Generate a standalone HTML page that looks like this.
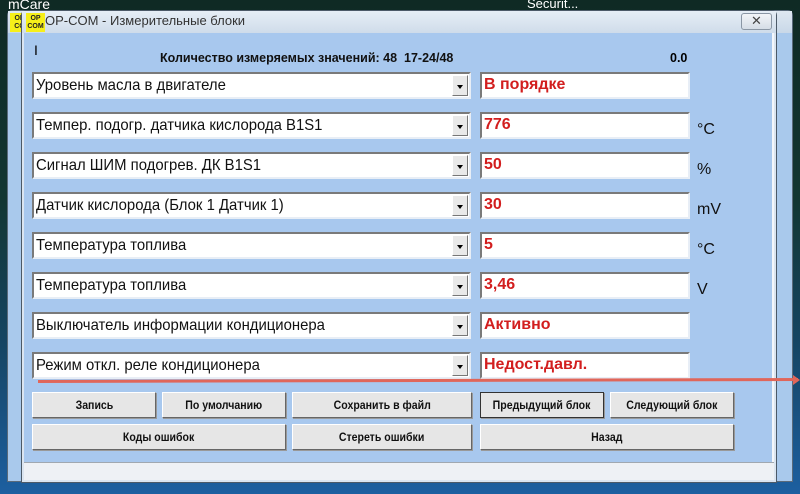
<!DOCTYPE html>
<html><head><meta charset="utf-8"><style>
*{margin:0;padding:0;box-sizing:border-box}
body{width:800px;height:494px;overflow:hidden;position:relative;font-family:"Liberation Sans",Arial,sans-serif;
background:linear-gradient(180deg,#0f2a24 0%,#123632 40%,#154564 70%,#1d5fa0 100%);}
.abs{position:absolute}
.back{left:7px;top:10px;width:786px;height:472px;background:#a9c9ec;border:1px solid #5a6a7a;border-radius:5px 5px 0 0}
.backtitle{left:8px;top:11px;width:784px;height:22px;background:linear-gradient(#dfe8f1,#c9d8e8)}
.win{left:21px;top:10px;width:756px;height:473px;background:#dbe5f0;border:1px solid #4c5a68;border-radius:5px 5px 0 0}
.title{left:22px;top:11px;width:754px;height:22px;background:linear-gradient(#e6eef6,#cfdcea)}
.content{left:24px;top:33px;width:750px;height:446px;background:#a8c8ee;border-right:2px solid #f4f7fb}
.logo{width:19px;height:19px;background:#f6ef1a;font:bold 7px "Liberation Sans",sans-serif;color:#222;text-align:center;line-height:8px;padding-top:2px}
.combo{left:32px;width:439px;height:27px;background:#fff;border:2px solid;border-color:#7a7a7a #e8eef6 #e8eef6 #7a7a7a;font-size:16px;line-height:24px;padding-left:2px;color:#111;white-space:nowrap;overflow:hidden}
.combo span{display:inline-block;transform:scaleX(0.93);transform-origin:0 50%}
.dd{position:absolute;right:1px;top:1px;width:16px;height:21px;background:#e9e9e9;border:1px solid;border-color:#fff #777 #777 #fff}
.dd:after{content:"";position:absolute;left:4px;top:9px;border-left:3.5px solid transparent;border-right:3.5px solid transparent;border-top:4px solid #000}
.val{left:480px;width:210px;height:27px;background:#fff;border:2px solid;border-color:#7a7a7a #e8eef6 #e8eef6 #7a7a7a;font-weight:bold;font-size:16px;color:#d21e1e;line-height:22px;padding-left:2px}
.unit{left:697px;font-size:16px;color:#111}
.btn{height:26px;background:#e6e6e6;border:1px solid;border-color:#fff #666 #666 #fff;box-shadow:1px 1px 0 #999;font:bold 12px "Liberation Sans",sans-serif;text-align:center;line-height:24px;color:#111;white-space:nowrap}
.btn span{display:inline-block;transform:scaleX(0.88)}
</style></head><body>
<div class="abs" style="left:8px;top:-4px;color:#fff;font-size:14px">mCare</div>
<div class="abs" style="left:527px;top:-4px;color:#fff;font-size:13px">Securit...</div>
<div class="abs back"></div><div class="abs backtitle"></div>
<div class="abs logo" style="left:10px;top:13px">OP<br>CO</div>
<div class="abs win"></div><div class="abs title"></div>
<div class="abs logo" style="left:26px;top:13px">OP<br>COM</div>
<div class="abs" style="left:45px;top:13px;font-size:13px;color:#333">OP-COM - Измерительные блоки</div>
<div class="abs" style="left:741px;top:13px;width:31px;height:17px;border:1px solid #8a96a4;border-radius:3px;background:linear-gradient(#f2f5f8,#d5dde6);font-size:13px;text-align:center;line-height:14px;color:#444">✕</div>
<div class="abs content"></div>
<div class="abs" style="left:34px;top:42px;font-size:14px">I</div>
<div class="abs" style="left:160px;top:51px;font-weight:bold;font-size:12.5px;color:#111">Количество измеряемых значений: 48&nbsp; 17-24/48</div>
<div class="abs" style="left:670px;top:51px;font-weight:bold;font-size:12.5px">0.0</div>

<div class="abs combo" style="top:72px"><span>Уровень масла в двигателе</span><div class="dd"></div></div>
<div class="abs val" style="top:72px">В порядке</div>
<div class="abs combo" style="top:112px"><span>Темпер. подогр. датчика кислорода B1S1</span><div class="dd"></div></div>
<div class="abs val" style="top:112px">776</div><div class="abs unit" style="top:121px">°C</div>
<div class="abs combo" style="top:152px"><span>Сигнал ШИМ подогрев. ДК B1S1</span><div class="dd"></div></div>
<div class="abs val" style="top:152px">50</div><div class="abs unit" style="top:161px">%</div>
<div class="abs combo" style="top:192px"><span>Датчик кислорода (Блок 1 Датчик 1)</span><div class="dd"></div></div>
<div class="abs val" style="top:192px">30</div><div class="abs unit" style="top:201px">mV</div>
<div class="abs combo" style="top:232px"><span>Температура топлива</span><div class="dd"></div></div>
<div class="abs val" style="top:232px">5</div><div class="abs unit" style="top:241px">°C</div>
<div class="abs combo" style="top:272px"><span>Температура топлива</span><div class="dd"></div></div>
<div class="abs val" style="top:272px">3,46</div><div class="abs unit" style="top:281px">V</div>
<div class="abs combo" style="top:312px"><span>Выключатель информации кондиционера</span><div class="dd"></div></div>
<div class="abs val" style="top:312px">Активно</div>
<div class="abs combo" style="top:352px"><span>Режим откл. реле кондиционера</span><div class="dd"></div></div>
<div class="abs val" style="top:352px">Недост.давл.</div>
<div class="abs" style="left:38px;top:379px;width:760px;height:3px;background:#e0665a;transform:rotate(-0.15deg)"></div>
<div class="abs" style="left:793px;top:375px;border-top:5px solid transparent;border-bottom:5px solid transparent;border-left:7px solid #e0665a"></div>

<div class="abs btn" style="left:32px;top:392px;width:124px"><span>Запись</span></div>
<div class="abs btn" style="left:162px;top:392px;width:124px"><span>По умолчанию</span></div>
<div class="abs btn" style="left:292px;top:392px;width:180px"><span>Сохранить в файл</span></div>
<div class="abs btn" style="left:480px;top:392px;width:124px;border:1px solid #333"><span>Предыдущий блок</span></div>
<div class="abs btn" style="left:610px;top:392px;width:124px"><span>Следующий блок</span></div>
<div class="abs btn" style="left:32px;top:424px;width:254px"><span>Коды ошибок</span></div>
<div class="abs btn" style="left:292px;top:424px;width:180px"><span>Стереть ошибки</span></div>
<div class="abs btn" style="left:480px;top:424px;width:254px"><span>Назад</span></div>
<div class="abs" style="left:24px;top:462px;width:750px;height:18px;background:#eef1f5;border-top:1px solid #a0a8b0"></div>
</body></html>
